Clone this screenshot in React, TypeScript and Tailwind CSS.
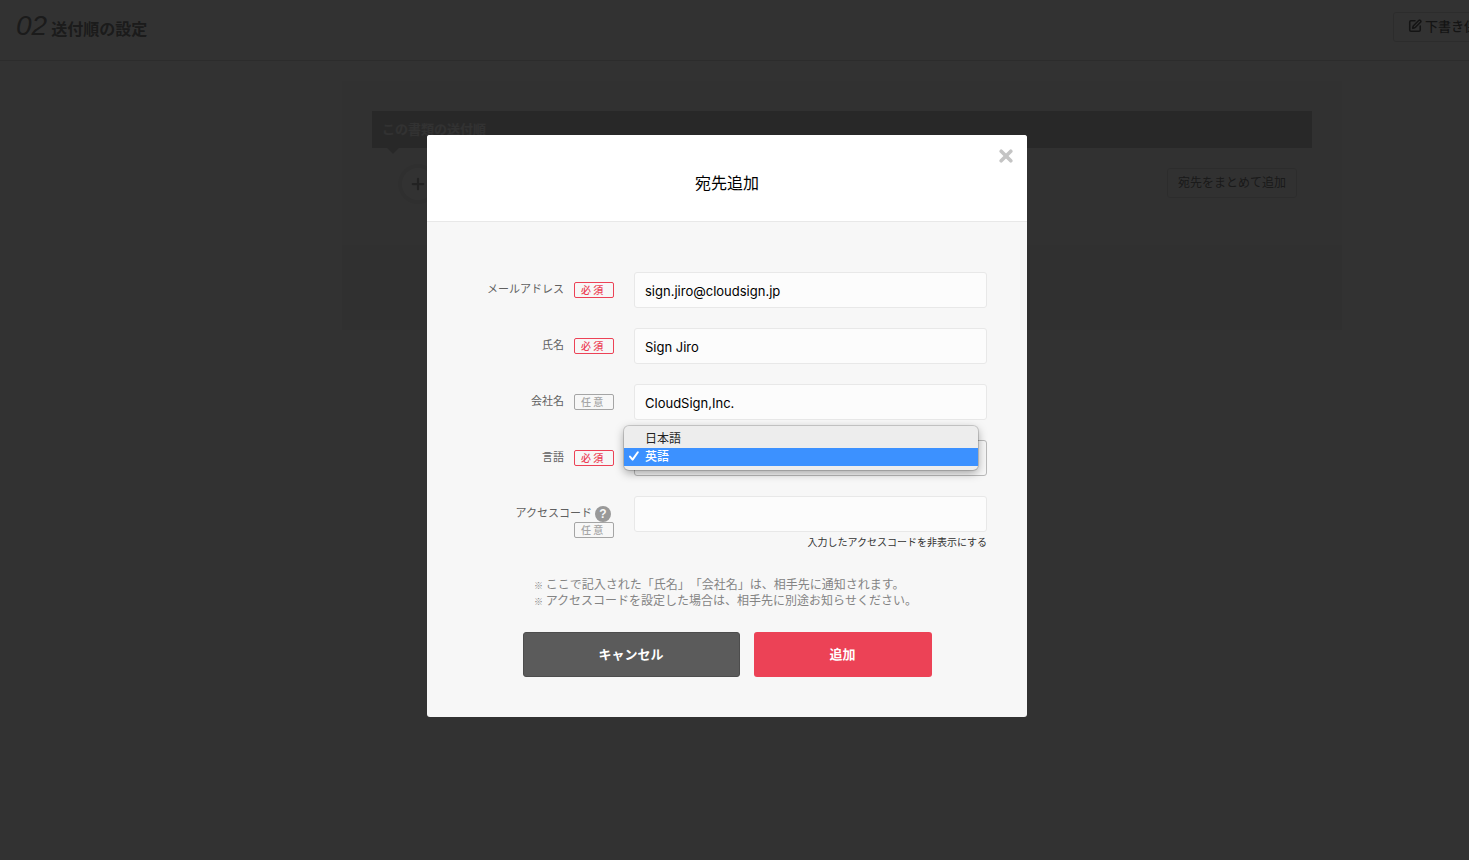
import { useState } from "react";
import type { ReactNode } from "react";
import { Plus, SquarePen } from "lucide-react";

type BadgeKind = "required" | "optional";

function Badge({ kind }: { kind: BadgeKind }) {
  const tone =
    kind === "required"
      ? "border-[#ec4256] text-[#ec4256]"
      : "border-[#a5a5a5] text-[#a5a5a5]";
  return (
    <span
      className={`flex h-4 w-10 items-center rounded-xs border pl-1.5 text-[10px] leading-none font-medium ${tone}`}
    >
      {kind === "required" ? "必 須" : "任 意"}
    </span>
  );
}

interface RowProps {
  id: string;
  label: string;
  kind: BadgeKind;
  help?: boolean;
  children: ReactNode;
}

function Row({ id, label, kind, help = false, children }: RowProps) {
  return (
    <div className="flex items-start gap-5">
      <div className="flex w-[140px] shrink-0 flex-wrap items-center justify-end gap-x-2.5 pt-2.5">
        <div className="flex h-4 items-center gap-[3px]">
          <label htmlFor={id} className="pb-1 text-[11px] leading-3 text-[#606060]">
            {label}
          </label>
          {help && (
            <button
              type="button"
              aria-label="ヘルプ"
              className="mr-[3px] flex size-4 items-center justify-center rounded-full bg-[#999] font-['Liberation_Sans',sans-serif] text-xs leading-none font-bold text-[#f7f7f7]"
            >
              ?
            </button>
          )}
        </div>
        <Badge kind={kind} />
      </div>
      <div className="relative min-w-0 flex-1">{children}</div>
    </div>
  );
}

const fieldClass =
  "block h-9 w-full rounded-[3px] border border-[#e8e8e8] bg-[#fcfcfc] px-2.5 pt-0.5 font-[Inter,'Noto_Sans_CJK_JP',sans-serif] text-[13px] text-black outline-none";

function TextRow({
  id,
  label,
  kind,
  initial,
}: {
  id: string;
  label: string;
  kind: BadgeKind;
  initial: string;
}) {
  const [value, setValue] = useState(initial);
  return (
    <Row id={id} label={label} kind={kind}>
      <input
        id={id}
        type="text"
        value={value}
        onChange={(e) => setValue(e.target.value)}
        className={fieldClass}
      />
    </Row>
  );
}

function SendOrderPage() {
  return (
    <div className="min-w-[1684px]">
      <header className="flex h-[61px] items-start justify-between border-b border-[#dadada] px-4 pt-3">
        <h1 className="flex items-baseline gap-1 text-[#868686]">
          <span className="font-['Liberation_Sans',sans-serif] text-[28px] leading-7 italic">02</span>
          <span className="text-base leading-7 font-bold">送付順の設定</span>
        </h1>
        <button
          type="button"
          className="mr-[163px] flex h-[30px] items-center gap-[3px] rounded-[3px] border border-[#dcdcdc] px-3.5 pb-0.5 text-[13px] font-medium text-[#666]"
        >
          <SquarePen size={14} strokeWidth={2.75} />
          下書き保存
        </button>
      </header>
      <main className="mx-auto mt-5 w-[1000px] bg-[#f5f5f5]">
        <section className="h-[164px] px-[30px] pt-[30px]">
          <h2 className="relative flex h-[37px] items-center bg-[#c8c8c8] px-2.5 pb-0.5 text-[13px] font-bold text-[#f8f8f8]">
            この書類の送付順
            <span className="absolute top-full left-[15px] size-0 border-x-6 border-t-6 border-x-transparent border-t-[#c8c8c8]" />
          </h2>
          <div className="flex items-start justify-between pt-4 pr-[15px] pl-[26px]">
            <button
              type="button"
              aria-label="宛先を追加"
              className="flex size-10 items-center justify-center rounded-full border-4 border-[#eaeaea] bg-[#fafafa] text-[#aaa]"
            >
              <Plus size={18} strokeWidth={3} />
            </button>
            <button
              type="button"
              className="mt-1 flex h-[30px] items-center rounded-[3px] border border-[#dcdcdc] px-2.5 pb-0.5 text-xs text-[#808080]"
            >
              宛先をまとめて追加
            </button>
          </div>
        </section>
        <div className="h-[85px] bg-[#f0f0f0]" />
      </main>
    </div>
  );
}

function LanguageMenu() {
  return (
    <ul
      role="listbox"
      aria-label="言語"
      className="absolute -top-3.5 right-[9px] -left-2.5 z-10 rounded-[5px] bg-[#ededed] pt-1 pb-1 text-xs text-[#222] shadow-[0_0_0_1px_rgba(0,0,0,0.15),0_3px_10px_rgba(0,0,0,0.35)]"
    >
      <li role="option" aria-selected="false" className="pb-0.5 pl-[21px] leading-4">
        日本語
      </li>
      <li
        role="option"
        aria-selected="true"
        className="flex items-center bg-[#3c91ff] pb-0.5 pl-[5px] leading-4 font-medium text-white"
      >
        <svg viewBox="0 0 10 10" className="mr-1.5 size-2.5" fill="none" stroke="currentColor" strokeWidth="2" strokeLinecap="round" strokeLinejoin="round">
          <path d="M1 5.6 L3.6 8.6 L8.8 1.2" />
        </svg>
        英語
      </li>
    </ul>
  );
}

function Note({ children }: { children: ReactNode }) {
  return (
    <p>
      <span className="text-[9px] leading-none font-bold">※</span> {children}
    </p>
  );
}

function AddRecipientDialog() {
  const [hidden, setHidden] = useState(false);
  const [code, setCode] = useState("");
  const [lang, setLang] = useState("en");
  return (
    <div
      role="dialog"
      aria-modal="true"
      aria-labelledby="dialog-title"
      className="relative w-[600px] rounded-[3px] bg-[#f7f7f7]"
    >
      <header className="flex h-[87px] items-center justify-center rounded-t-[3px] border-b border-[#e8e8e8] bg-white pt-2">
        <h2 id="dialog-title" className="text-base text-black">
          宛先追加
        </h2>
        <button type="button" aria-label="閉じる" className="absolute top-3.5 right-3.5">
          <svg viewBox="0 0 14 14" className="size-3.5" stroke="#c4c4c4" strokeWidth="3.6" strokeLinecap="round">
            <path d="M2.2 2.2 L11.8 11.8 M11.8 2.2 L2.2 11.8" />
          </svg>
        </button>
      </header>
      <form className="px-10 pt-[50px] pb-10" onSubmit={(e) => e.preventDefault()}>
        <div className="flex flex-col gap-5 pl-[7px]">
          <TextRow id="email" label="メールアドレス" kind="required" initial="sign.jiro@cloudsign.jp" />
          <TextRow id="name" label="氏名" kind="required" initial="Sign Jiro" />
          <TextRow id="company" label="会社名" kind="optional" initial="CloudSign,Inc." />
          <Row id="language" label="言語" kind="required">
            <select
              id="language"
              value={lang}
              onChange={(e) => setLang(e.target.value)}
              className="block h-9 w-full appearance-none rounded-[3px] border border-[#b9b9b9] bg-[#f7f7f7] px-2.5 text-xs text-black outline-none"
            >
              <option value="ja">日本語</option>
              <option value="en">英語</option>
            </select>
            <LanguageMenu />
          </Row>
          <Row id="access-code" label="アクセスコード" kind="optional" help>
            <input
              id="access-code"
              type={hidden ? "password" : "text"}
              value={code}
              onChange={(e) => setCode(e.target.value)}
              className={fieldClass}
            />
            <button
              type="button"
              onClick={() => setHidden(!hidden)}
              className="mt-0.5 ml-auto block text-[10px] leading-4 text-[#333]"
            >
              入力したアクセスコードを非表示にする
            </button>
          </Row>
        </div>
        <div className="mt-[26px] pl-[67px] text-xs leading-4 text-[#848484] [text-spacing-trim:space-all]">
          <Note>ここで記入された「氏名」「会社名」は、相手先に通知されます。</Note>
          <Note>アクセスコードを設定した場合は、相手先に別途お知らせください。</Note>
        </div>
        <div className="mt-6 flex justify-center gap-3.5 text-[13px] font-bold text-white">
          <button type="button" className="h-[45px] w-[217px] rounded-[3px] border border-[#4d4d4d] bg-[#5b5b5b] pb-0.5">
            キャンセル
          </button>
          <button type="submit" className="h-[45px] w-[178px] rounded-[3px] bg-[#ec4256] pb-0.5">
            追加
          </button>
        </div>
      </form>
    </div>
  );
}

export default function App() {
  return (
    <div className="min-h-screen overflow-x-hidden bg-[#fafafa] font-['Noto_Sans_CJK_JP',sans-serif]">
      <SendOrderPage />
      <div className="fixed inset-0 flex items-start justify-center overflow-y-auto bg-black/80 pt-[135px] pr-[15px]">
        <AddRecipientDialog />
      </div>
    </div>
  );
}
